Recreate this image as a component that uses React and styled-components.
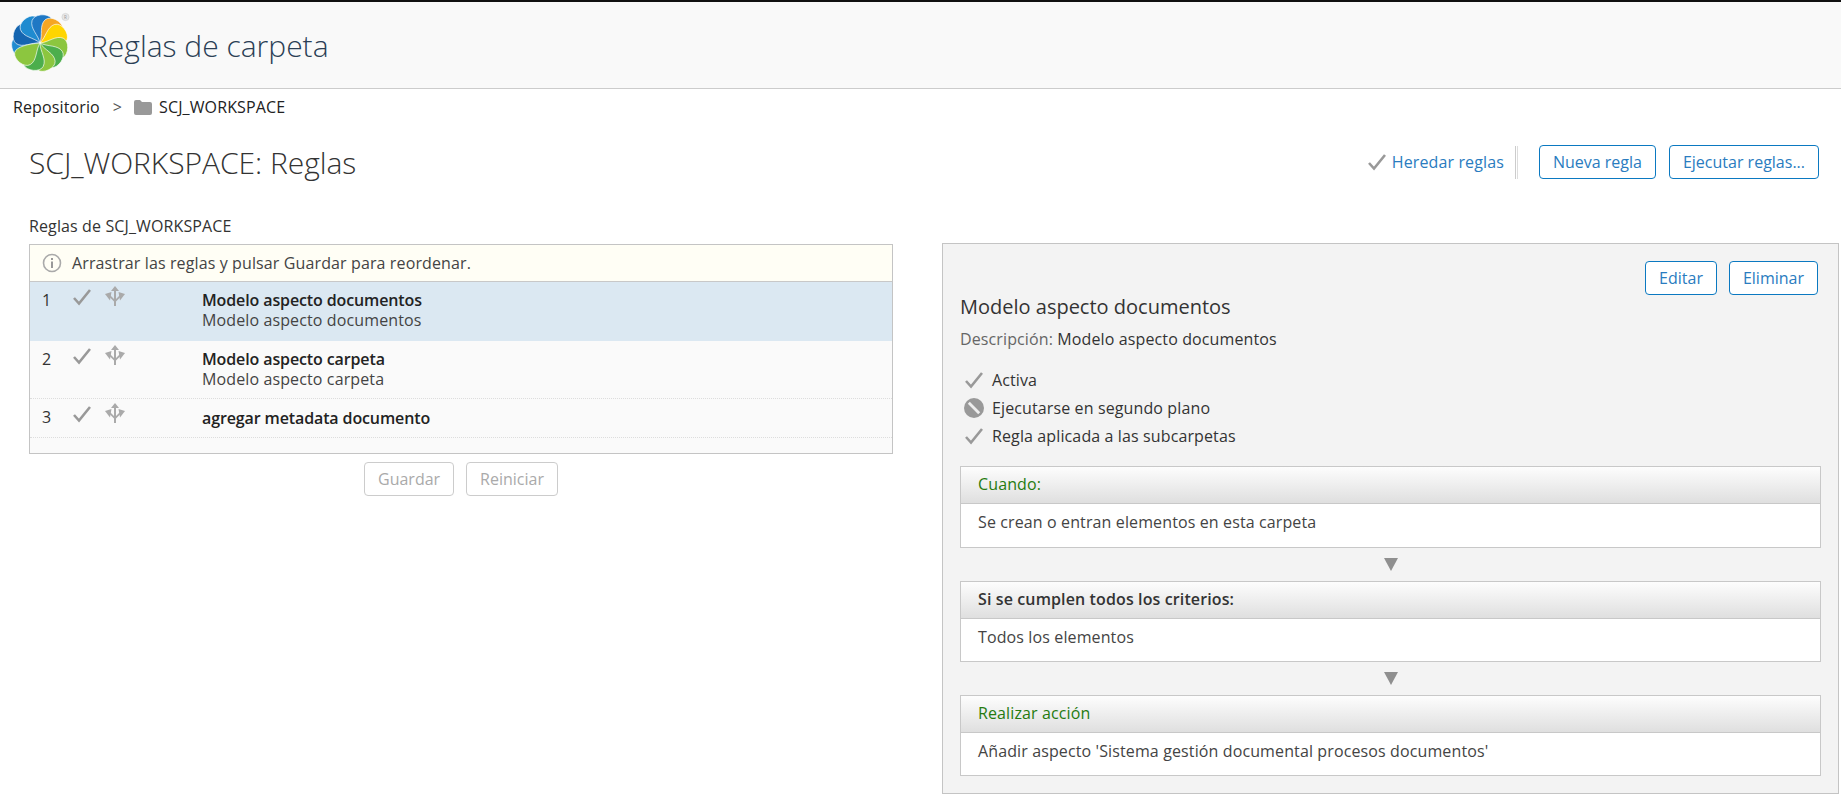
import React from "react";
import styled, { createGlobalStyle } from "styled-components";

const GlobalStyle = createGlobalStyle`
  html, body {
    margin: 0;
    padding: 0;
    background: #fff;
    font-family: "Open Sans", "Liberation Sans", sans-serif;
    font-size: 16px;
    letter-spacing: 0.12px;
    color: #333;
  }
`;

const Page = styled.div`
  width: 1841px;
  height: 806px;
  overflow: hidden;
  border-top: 2px solid #111;
  box-sizing: border-box;
`;

const Header = styled.header`
  display: flex;
  align-items: center;
  height: 87px;
  box-sizing: border-box;
  padding-left: 9px;
  background: #f9f9f9;
  border-bottom: 1px solid #ccc;
`;

const LogoMark = styled.svg`
  margin-bottom: 4px;
`;

const AppTitle = styled.h1`
  margin: 0 0 0 19px;
  font-size: 30px;
  font-weight: 300;
  letter-spacing: 0;
  color: #2b3f55;
`;

const Breadcrumb = styled.nav`
  display: flex;
  align-items: center;
  height: 36px;
  padding-left: 13px;
  color: #222;
`;

const Crumb = styled.span`
  display: inline-flex;
  align-items: center;
  gap: 7px;
`;

const CrumbSep = styled.span`
  margin: 0 12px 0 13px;
  color: #555;
`;

const TitleBar = styled.div`
  display: flex;
  justify-content: space-between;
  align-items: center;
  height: 34px;
  padding: 20px 22px 0 29px;
`;

const PageTitle = styled.h2`
  margin: 0;
  font-size: 30px;
  font-weight: 300;
  letter-spacing: -0.05px;
  color: #333;
`;

const Actions = styled.div`
  display: flex;
  align-items: center;
`;

const InheritLink = styled.span`
  display: inline-flex;
  align-items: center;
  gap: 6px;
  color: #2a7cc0;
`;

const Divider = styled.span`
  width: 1px;
  height: 33px;
  margin: 0 21px 0 11px;
  border-left: 1px solid #ccc;
  border-right: 1px solid #ddd;
`;

const Button = styled.button`
  height: 34px;
  padding: 0 13px;
  margin-left: ${(p) => p.$gap || 0}px;
  box-sizing: border-box;
  background: #fff;
  border: 1px solid ${(p) => (p.disabled ? "#ccc" : "#0b79c1")};
  border-radius: 4px;
  color: ${(p) => (p.disabled ? "#aaa" : "#2a7cc0")};
  font: inherit;
`;

const Columns = styled.div`
  display: grid;
  grid-template-columns: 864px 897px;
  column-gap: 49px;
  padding-left: 29px;
  margin-top: 35px;
`;

const ListLabel = styled.div`
  height: 20px;
  line-height: 20px;
  margin: 2px 0 8px;
  color: #333;
`;

const RuleList = styled.div`
  border: 1px solid #c4c4c4;
  height: 210px;
  box-sizing: border-box;
  background: #fafafa;
`;

const Notice = styled.div`
  display: flex;
  align-items: center;
  gap: 10px;
  height: 37px;
  box-sizing: border-box;
  padding-left: 12px;
  background: #fffef5;
  border-bottom: 1px solid #c8c8c8;
  color: #444;
`;

const Row = styled.div`
  display: grid;
  grid-template-columns: 31px 32px 97px 1fr;
  height: ${(p) => p.$h}px;
  box-sizing: border-box;
  padding-left: 12px;
  background: ${(p) => (p.$selected ? "#dbe8f2" : "transparent")};
  border-bottom: ${(p) => (p.$selected ? "none" : "1px dotted #ddd")};
`;

const RowNum = styled.span`
  padding-top: 8px;
  line-height: 20px;
`;

const RowIcon = styled.span`
  padding-top: ${(p) => p.$top}px;
`;

const RowText = styled.div`
  padding-top: ${(p) => p.$top}px;
  line-height: 20px;
  color: #444;
`;

const RowName = styled.div`
  font-weight: 600;
  letter-spacing: -0.12px;
  color: #222;
`;

const ListButtons = styled.div`
  display: flex;
  justify-content: center;
  gap: 12px;
  margin-top: 8px;
`;

const Panel = styled.aside`
  height: 551px;
  margin-top: 29px;
  box-sizing: border-box;
  padding: 17px 17px 0;
  background: #f3f3f3;
  border: 1px solid #c4c4c4;
`;

const PanelActions = styled.div`
  display: flex;
  justify-content: flex-end;
  padding-right: 3px;
`;

const RuleTitle = styled.h3`
  margin: 0;
  font-size: 20px;
  font-weight: 400;
  line-height: 24px;
  letter-spacing: 0;
  color: #333;
`;

const Description = styled.div`
  margin-top: 10px;
  line-height: 20px;
  color: #333;
`;

const DescLabel = styled.span`
  color: #666;
`;

const Flags = styled.div`
  margin: 17px 0 16px;
`;

const Flag = styled.div`
  display: flex;
  align-items: center;
  gap: 8px;
  height: 28px;
  padding-left: 4px;
  color: #333;
`;

const FlagIcon = styled.span`
  display: flex;
  justify-content: center;
  width: 20px;
`;

const FlowBlock = styled.section`
  border: 1px solid #c8c8c8;
  background: #fff;
`;

const FlowHead = styled.div`
  height: 37px;
  line-height: 35px;
  padding-left: 17px;
  box-sizing: border-box;
  background: linear-gradient(#fdfdfd, #dfdfdf);
  border-bottom: 1px solid #c8c8c8;
  color: ${(p) => (p.$green ? "#267b10" : "#333")};
  font-weight: ${(p) => (p.$green ? 400 : 600)};
`;

const FlowBody = styled.div`
  height: ${(p) => p.$h || 42}px;
  line-height: 37px;
  padding-left: 17px;
  box-sizing: border-box;
  color: #444;
`;

const FlowArrow = styled.div`
  display: flex;
  justify-content: center;
  align-items: center;
  height: 33px;
`;

const TriangleDown = styled.span`
  width: 0;
  height: 0;
  border-left: 7px solid transparent;
  border-right: 7px solid transparent;
  border-top: 13px solid #8f8f8f;
`;

const RegMark = styled.text`
  font-size: 4.5px;
  letter-spacing: 0;
  fill: #999;
  text-anchor: middle;
`;

const petalPath = "M0 0 C-3 -8 -12 -13 -11 -21 C-10 -28 3 -31 8 -26 C12 -21 6 -9 0 0 Z";

const Logo = () => {
  const petals = [
    ["#1f8bd0", -100],
    ["#1565b0", -64],
    ["#1f8bd0", -28],
    ["#1f78c4", 8],
    ["#f5a623", 40],
    ["#ffd500", 66],
    ["#8cc63f", 106],
    ["#4cae4c", 138],
    ["#8cc63f", 168],
    ["#4cae4c", 200],
    ["#8cc63f", 232],
  ];
  return (
    <LogoMark width="62" height="62" viewBox="-31 -31 62 62">
      {petals.map(([c, a], i) => (
        <path key={i} d={petalPath} fill={c} stroke="#fff" strokeWidth="0.6" transform={`rotate(${a})`} />
      ))}
      <circle cx="25.5" cy="-26" r="3.6" fill="#e8e8e8" stroke="#ccc" strokeWidth="0.6" />
      <RegMark x="25.5" y="-24.4">R</RegMark>
    </LogoMark>
  );
};

const Check = ({ size = 18, color = "#999" }) => (
  <svg width={size} height={size} viewBox="0 0 18 18">
    <path d="M1 10 L6 15.5 L17 2" fill="none" stroke={color} strokeWidth="2.6" />
  </svg>
);

const MoveIcon = () => (
  <svg width="20" height="20" viewBox="0 0 20 20" fill="#aaa">
    <path d="M10 0 L14 5 H11 V20 H9 V5 H6 Z" />
    <path d="M0 8 L6.5 6 L5 14.5 Z" />
    <path d="M20 8 L13.5 6 L15 14.5 Z" />
    <path d="M5.5 9.5 L10 14 L14.5 9.5 L15.5 11 L10 16.5 L4.5 11 Z" />
  </svg>
);

const BanIcon = () => (
  <svg width="20" height="20" viewBox="0 0 20 20">
    <circle cx="10" cy="10" r="10" fill="#999" />
    <path d="M3.8 5.8 L14.2 16.2 L16.2 14.2 L5.8 3.8 Z" fill="#eee" />
  </svg>
);

const InfoIcon = () => (
  <svg width="20" height="20" viewBox="0 0 20 20">
    <circle cx="10" cy="10" r="8.5" fill="none" stroke="#aaa" strokeWidth="1.6" />
    <rect x="9" y="8.5" width="2" height="6.5" fill="#999" />
    <rect x="9" y="5" width="2" height="2" fill="#999" />
  </svg>
);

const FolderIcon = () => (
  <svg width="18" height="15" viewBox="0 0 18 15">
    <path d="M0 2 Q0 0 2 0 H6 L8 2 H16 Q18 2 18 4 V13 Q18 15 16 15 H2 Q0 15 0 13 Z" fill="#999" />
  </svg>
);

const rules = [
  { n: 1, name: "Modelo aspecto documentos", desc: "Modelo aspecto documentos", h: 59, top: 8, selected: true },
  { n: 2, name: "Modelo aspecto carpeta", desc: "Modelo aspecto carpeta", h: 58, top: 8 },
  { n: 3, name: "agregar metadata documento", h: 39, top: 9 },
];

export default function App() {
  return (
    <>
      <GlobalStyle />
      <Page>
        <Header>
          <Logo />
          <AppTitle>Reglas de carpeta</AppTitle>
        </Header>
        <Breadcrumb>
          <Crumb>Repositorio</Crumb>
          <CrumbSep>&gt;</CrumbSep>
          <Crumb>
            <FolderIcon />
            SCJ_WORKSPACE
          </Crumb>
        </Breadcrumb>
        <TitleBar>
          <PageTitle>SCJ_WORKSPACE: Reglas</PageTitle>
          <Actions>
            <InheritLink>
              <Check />
              Heredar reglas
            </InheritLink>
            <Divider />
            <Button>Nueva regla</Button>
            <Button $gap={13}>Ejecutar reglas...</Button>
          </Actions>
        </TitleBar>
        <Columns>
          <div>
            <ListLabel>Reglas de SCJ_WORKSPACE</ListLabel>
            <RuleList>
              <Notice>
                <InfoIcon />
                Arrastrar las reglas y pulsar Guardar para reordenar.
              </Notice>
              {rules.map((r) => (
                <Row key={r.n} $h={r.h} $selected={r.selected}>
                  <RowNum>{r.n}</RowNum>
                  <RowIcon $top={6}>
                    <Check />
                  </RowIcon>
                  <RowIcon $top={4}>
                    <MoveIcon />
                  </RowIcon>
                  <RowText $top={r.top}>
                    <RowName>{r.name}</RowName>
                    {r.desc}
                  </RowText>
                </Row>
              ))}
            </RuleList>
            <ListButtons>
              <Button disabled>Guardar</Button>
              <Button disabled>Reiniciar</Button>
            </ListButtons>
          </div>
          <Panel>
            <PanelActions>
              <Button>Editar</Button>
              <Button $gap={12}>Eliminar</Button>
            </PanelActions>
            <RuleTitle>Modelo aspecto documentos</RuleTitle>
            <Description>
              <DescLabel>Descripción:</DescLabel> Modelo aspecto documentos
            </Description>
            <Flags>
              <Flag>
                <FlagIcon>
                  <Check />
                </FlagIcon>
                Activa
              </Flag>
              <Flag>
                <FlagIcon>
                  <BanIcon />
                </FlagIcon>
                Ejecutarse en segundo plano
              </Flag>
              <Flag>
                <FlagIcon>
                  <Check />
                </FlagIcon>
                Regla aplicada a las subcarpetas
              </Flag>
            </Flags>
            <FlowBlock>
              <FlowHead $green>Cuando:</FlowHead>
              <FlowBody $h={43}>Se crean o entran elementos en esta carpeta</FlowBody>
            </FlowBlock>
            <FlowArrow>
              <TriangleDown />
            </FlowArrow>
            <FlowBlock>
              <FlowHead>Si se cumplen todos los criterios:</FlowHead>
              <FlowBody>Todos los elementos</FlowBody>
            </FlowBlock>
            <FlowArrow>
              <TriangleDown />
            </FlowArrow>
            <FlowBlock>
              <FlowHead $green>Realizar acción</FlowHead>
              <FlowBody>Añadir aspecto 'Sistema gestión documental procesos documentos'</FlowBody>
            </FlowBlock>
          </Panel>
        </Columns>
      </Page>
    </>
  );
}
